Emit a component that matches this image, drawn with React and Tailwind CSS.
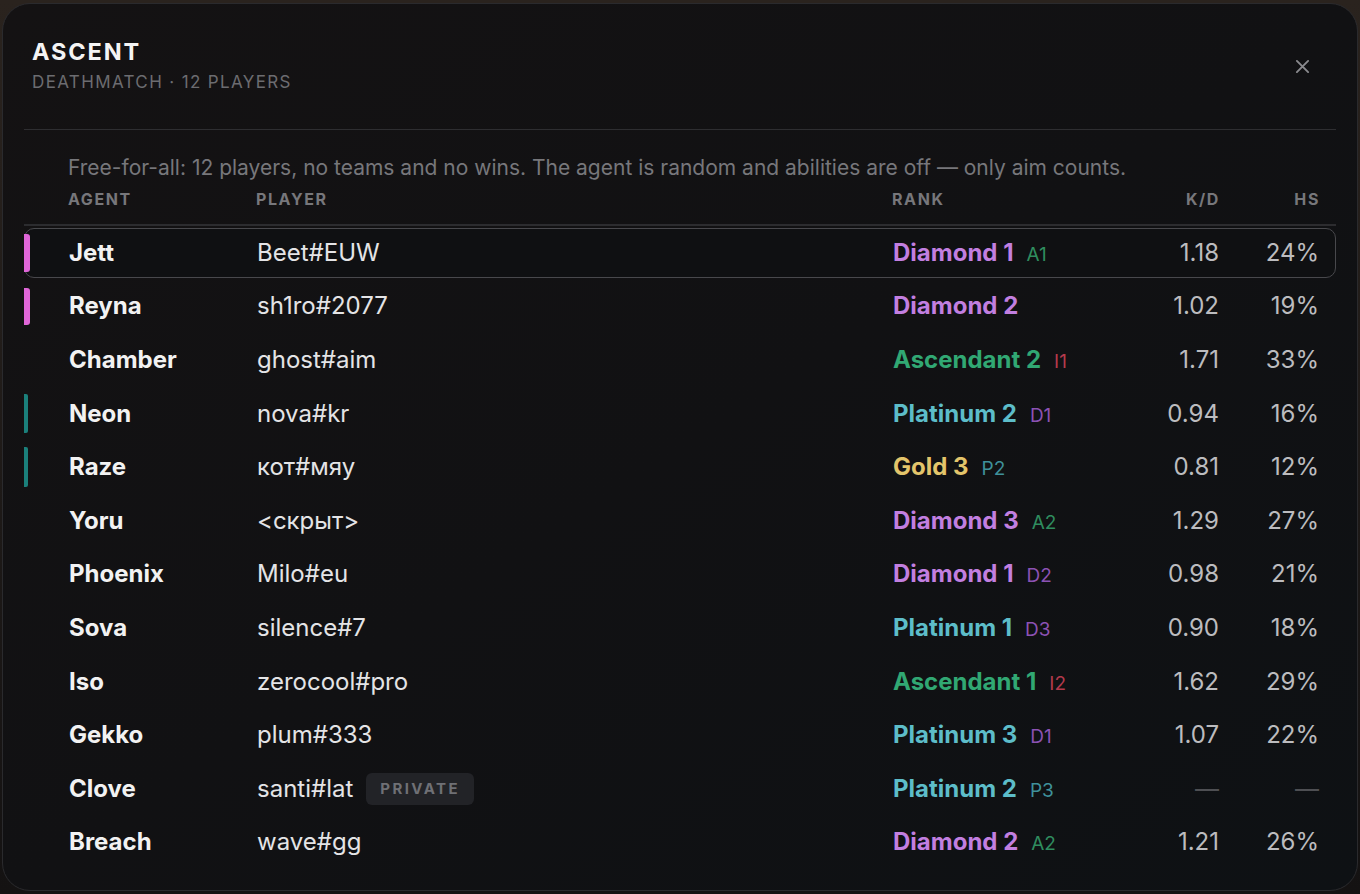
import React from 'react';

const RANK = {
    diamond: 'text-[#c27fe0]',
    ascendant: 'text-[#31a873]',
    platinum: 'text-[#5dbdc9]',
    gold: 'text-[#e3c56b]',
};

const TAG = {
    A: 'text-[#2f8d5f]',
    I: 'text-[#b33a4c]',
    D: 'text-[#8c52b3]',
    P: 'text-[#3f919b]',
};

const players = [
    { agent: 'Jett', player: 'Beet#EUW', rank: 'Diamond 1', tier: 'diamond', tag: 'A1', kd: '1.18', hs: '24%', bar: 'pink', active: true },
    { agent: 'Reyna', player: 'sh1ro#2077', rank: 'Diamond 2', tier: 'diamond', kd: '1.02', hs: '19%', bar: 'pink' },
    { agent: 'Chamber', player: 'ghost#aim', rank: 'Ascendant 2', tier: 'ascendant', tag: 'I1', kd: '1.71', hs: '33%' },
    { agent: 'Neon', player: 'nova#kr', rank: 'Platinum 2', tier: 'platinum', tag: 'D1', kd: '0.94', hs: '16%', bar: 'teal' },
    { agent: 'Raze', player: 'кот#мяу', rank: 'Gold 3', tier: 'gold', tag: 'P2', kd: '0.81', hs: '12%', bar: 'teal' },
    { agent: 'Yoru', player: '<скрыт>', rank: 'Diamond 3', tier: 'diamond', tag: 'A2', kd: '1.29', hs: '27%' },
    { agent: 'Phoenix', player: 'Milo#eu', rank: 'Diamond 1', tier: 'diamond', tag: 'D2', kd: '0.98', hs: '21%' },
    { agent: 'Sova', player: 'silence#7', rank: 'Platinum 1', tier: 'platinum', tag: 'D3', kd: '0.90', hs: '18%' },
    { agent: 'Iso', player: 'zerocool#pro', rank: 'Ascendant 1', tier: 'ascendant', tag: 'I2', kd: '1.62', hs: '29%' },
    { agent: 'Gekko', player: 'plum#333', rank: 'Platinum 3', tier: 'platinum', tag: 'D1', kd: '1.07', hs: '22%' },
    { agent: 'Clove', player: 'santi#lat', rank: 'Platinum 2', tier: 'platinum', tag: 'P3', kd: null, hs: null, hidden: true },
    { agent: 'Breach', player: 'wave#gg', rank: 'Diamond 2', tier: 'diamond', tag: 'A2', kd: '1.21', hs: '26%' },
];

const grid = 'grid grid-cols-[188px_636px_1fr_100px_100px] pl-[44px] pr-[16px]';

const Row = ({ p }) => (
    <div className="relative h-[53.6px] py-[2px]">
        <div className={`relative h-full rounded-[10px] border ${p.active ? 'border-[#48484c] bg-[#0f1012]' : 'border-transparent'}`}>
            {p.bar === 'pink' && (
                <div className="absolute left-[-1px] top-[5px] bottom-[5px] w-[6px] rounded-r-[3px] bg-[#e066d8]" />
            )}
            {p.bar === 'teal' && (
                <div className="absolute left-[-1px] top-[4px] bottom-[4px] w-[4px] rounded-r-[2px] bg-[#1b807b]" />
            )}
            <div className={`${grid} h-full items-center`}>
                <div className="text-[24px] font-bold text-[#f2f2f2]">{p.agent}</div>
                <div className="flex items-center gap-[13px] text-[24px] text-[#e4e4e6]">
                    <span>{p.player}</span>
                    {p.hidden && (
                        <span className="rounded-[6px] bg-[#222327] px-[14px] py-[5px] text-[15px] leading-[22px] font-bold tracking-[0.16em] text-[#6f7075]">
                            PRIVATE
                        </span>
                    )}
                </div>
                <div className="flex items-baseline gap-[13px]">
                    <span className={`text-[24px] font-bold ${RANK[p.tier]}`}>{p.rank}</span>
                    {p.tag && <span className={`text-[19px] ${TAG[p.tag[0]]}`}>{p.tag}</span>}
                </div>
                <div className={`text-right text-[24px] ${p.kd ? 'text-[#bcbcbf]' : 'text-[#4e4f53]'}`}>{p.kd || '—'}</div>
                <div className={`text-right text-[24px] ${p.hs ? 'text-[#bcbcbf]' : 'text-[#4e4f53]'}`}>{p.hs || '—'}</div>
            </div>
        </div>
    </div>
);

export default function App() {
    return (
        <div className="h-[894px] w-[1360px] overflow-hidden bg-gradient-to-b from-[#2a231e] to-[#141212] pl-[2px] pr-[2px] pt-[3px] font-['Inter','Noto_Sans',sans-serif]">
            <div className="h-[888px] rounded-[28px] border border-[#2a2a2d] bg-gradient-to-br from-[#141213] via-[#111113] to-[#0e1114]">
                <div className="flex items-start justify-between pl-[29px] pr-[30px] pt-[34px]">
                    <div>
                        <div className="text-[23.5px] font-bold leading-[28px] tracking-[0.08em] text-[#f4f4f4]">ASCENT</div>
                        <div className="mt-[5px] text-[17px] leading-[22px] tracking-[0.08em] text-[#6c6c70]">DEATHMATCH · 12 PLAYERS</div>
                    </div>
                    <button className="mr-[17px] mt-[21px] text-[#8a8a8e]">
                        <svg width="15" height="15" viewBox="0 0 16 16" fill="none" stroke="currentColor" strokeWidth="2" strokeLinecap="round">
                            <path d="M2 2l12 12M14 2L2 14" />
                        </svg>
                    </button>
                </div>
                <div className="mx-[21px] mt-[36px] h-px bg-[#2e2e31]" />
                <div className="mx-[21px]">
                    <p className="mt-[25px] pl-[44px] text-[21px] leading-[26px] text-[#77777b]">
                        Free-for-all: 12 players, no teams and no wins. The agent is random and abilities are off — only aim counts.
                    </p>
                    <div className={`${grid} h-[45px] items-start border-b-2 border-[#2c2c2f] pt-[8px] text-[16px] leading-[20px] font-bold tracking-[0.1em] text-[#77777b]`}>
                        <div>AGENT</div>
                        <div>PLAYER</div>
                        <div>RANK</div>
                        <div className="text-right">K/D</div>
                        <div className="text-right">HS</div>
                    </div>
                    {players.map((p) => (
                        <Row key={p.agent} p={p} />
                    ))}
                </div>
            </div>
        </div>
    );
}
